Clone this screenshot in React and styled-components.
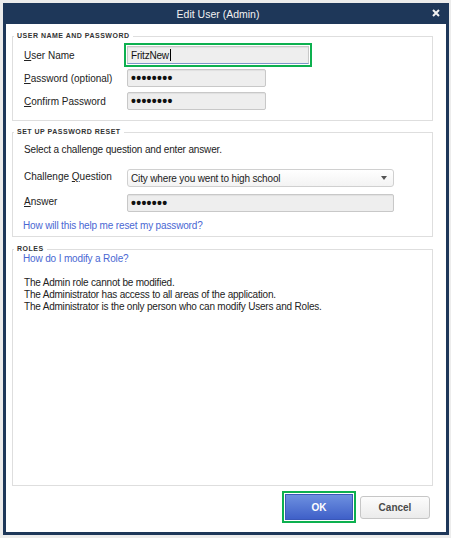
import styled, { createGlobalStyle } from 'styled-components';

const GlobalStyle = createGlobalStyle`
  html, body {
    margin: 0;
    padding: 0;
    background: #ececec;
    font-family: "Liberation Sans", Arial, sans-serif;
  }
`;

const Dialog = styled.div`
  box-sizing: border-box;
  width: 446px;
  height: 532px;
  margin: 3px 0 0 3px;
  border: 3px solid #1e3759;
  background: #fff;
  display: flex;
  flex-direction: column;
`;

const TitleBar = styled.div`
  box-sizing: border-box;
  height: 18px;
  padding: 0 16px 3px 0;
  flex-shrink: 0;
  background: #1e3759;
  display: flex;
  align-items: center;
  justify-content: center;
  position: relative;
  color: #f2f2f2;
  font-size: 10.5px;
`;

const CloseButton = styled.span`
  position: absolute;
  right: 6px;
  top: 3px;
  width: 8px;
  height: 8px;
  display: flex;
`;

const Content = styled.div`
  flex: 1;
  display: flex;
  flex-direction: column;
  padding: 8px 13px 0 6px;
  min-height: 0;
`;

const Group = styled.fieldset`
  margin: ${({ $gap }) => $gap || 0}px 0 0 0;
  padding: 0;
  border: 1px solid #dedede;
  min-width: 0;
  ${({ $grow }) => ($grow ? 'flex: 1;' : '')}
`;

const Legend = styled.legend`
  margin-left: 1px;
  padding: 0 3px;
  font-size: 7px;
  line-height: 8px;
  font-weight: bold;
  letter-spacing: 0.5px;
  color: #333;
`;

const GroupBody = styled.div`
  padding: ${({ $pad }) => $pad || '6px 10px 10px 11px'};
  display: flex;
  flex-direction: column;
`;

const Rows = styled.div`
  display: flex;
  flex-direction: column;
  gap: ${({ $gap }) => $gap ?? 5}px;
  margin-top: ${({ $top }) => $top || 0}px;
`;

const Row = styled.div`
  display: grid;
  grid-template-columns: 103px auto;
  align-items: center;
`;

const Label = styled.label`
  font-size: 10px;
  color: #222;
  margin-top: ${({ $lift }) => ($lift ? '-3px' : '0')};
`;

const Field = styled.div`
  box-sizing: border-box;
  width: ${({ $w }) => $w}px;
  height: 18px;
  background: #eeeeee;
  border: 1px solid #c8c8c8;
  border-radius: 2px;
  box-shadow: inset 0 1px 1px rgba(0, 0, 0, 0.06);
  display: flex;
  align-items: center;
  padding-left: 3px;
  font-size: 10px;
  letter-spacing: -0.2px;
  color: #111;
  ${({ $focused }) =>
    $focused &&
    `
    border-radius: 0;
    border-bottom-color: #7d95c8;
    outline: 2px solid #0db04f;
    outline-offset: 1px;
  `}
`;

const Dots = styled.span`
  font-size: 14px;
  letter-spacing: 0.3px;
  font-weight: bold;
  line-height: 1;
  margin-top: -1px;
`;

const Caret = styled.span`
  display: inline-block;
  width: 1px;
  height: 12px;
  background: #000;
  margin-left: 1px;
`;

const Select = styled.div`
  box-sizing: border-box;
  width: 267px;
  height: 18px;
  background: linear-gradient(#ffffff, #f3f3f3);
  border: 1px solid #d0d0d0;
  border-radius: 3px;
  display: flex;
  align-items: center;
  justify-content: space-between;
  padding: 0 6px 0 3px;
  font-size: 10px;
  letter-spacing: -0.15px;
  color: #222;
`;

const Arrow = styled.span`
  width: 0;
  height: 0;
  border-left: 3.5px solid transparent;
  border-right: 3.5px solid transparent;
  border-top: 4px solid #555;
`;

const Intro = styled.div`
  font-size: 10px;
  line-height: 12px;
  letter-spacing: -0.15px;
  color: #222;
`;

const HelpLink = styled.a`
  display: block;
  font-size: 10px;
  line-height: 12px;
  letter-spacing: -0.15px;
  color: #4a67d3;
  text-decoration: none;
  margin-top: ${({ $top }) => $top || 0}px;
  margin-left: ${({ $left }) => $left || 0}px;
`;

const Notes = styled.div`
  margin-top: 12px;
  font-size: 10px;
  line-height: 12px;
  letter-spacing: -0.2px;
  color: #222;
`;

const Footer = styled.div`
  display: flex;
  justify-content: flex-end;
  align-items: center;
  gap: 7px;
  padding: 8px 3px 12px 0;
`;

const Button = styled.button`
  box-sizing: border-box;
  font-family: inherit;
  font-size: 10px;
  font-weight: bold;
  padding: 0;
  cursor: pointer;
  ${({ $primary }) =>
    $primary
      ? `
    width: 68px;
    height: 26px;
    color: #fff;
    background: linear-gradient(#6d90e0, #3f60c8);
    border: 1px solid #3a58b8;
    border-radius: 0;
    outline: 2px solid #0db04f;
    outline-offset: 1px;
  `
      : `
    width: 70px;
    height: 23px;
    color: #4a4a4a;
    background: linear-gradient(#fcfcfc, #ebebeb);
    border: 1px solid #c6c6c6;
    border-radius: 3px;
  `}
`;

function App() {
  return (
    <>
      <GlobalStyle />
      <Dialog>
        <TitleBar>
          Edit User (Admin)
          <CloseButton>
            <svg width="8" height="8" viewBox="0 0 8 8">
              <path d="M1 1L7 7M7 1L1 7" stroke="#f2f2f2" strokeWidth="2" />
            </svg>
          </CloseButton>
        </TitleBar>
        <Content>
          <Group>
            <Legend>USER NAME AND PASSWORD</Legend>
            <GroupBody>
              <Rows>
                <Row>
                  <Label><u>U</u>ser Name</Label>
                  <Field $w={182} $focused>
                    FritzNew<Caret />
                  </Field>
                </Row>
                <Row>
                  <Label><u>P</u>assword (optional)</Label>
                  <Field $w={139}><Dots>••••••••</Dots></Field>
                </Row>
                <Row>
                  <Label><u>C</u>onfirm Password</Label>
                  <Field $w={139}><Dots>••••••••</Dots></Field>
                </Row>
              </Rows>
            </GroupBody>
          </Group>

          <Group $gap={7}>
            <Legend>SET UP PASSWORD RESET</Legend>
            <GroupBody $pad="8px 10px 4px 11px">
              <Intro>Select a challenge question and enter answer.</Intro>
              <Rows $top={13} $gap={7}>
                <Row>
                  <Label $lift>Challenge <u>Q</u>uestion</Label>
                  <Select>
                    City where you went to high school
                    <Arrow />
                  </Select>
                </Row>
                <Row>
                  <Label $lift><u>A</u>nswer</Label>
                  <Field $w={267}><Dots>•••••••</Dots></Field>
                </Row>
              </Rows>
              <HelpLink href="#" $top={8} $left={-1}>
                How will this help me reset my password?
              </HelpLink>
            </GroupBody>
          </Group>

          <Group $gap={8} $grow>
            <Legend>ROLES</Legend>
            <GroupBody $pad="0 10px 0 11px">
              <HelpLink href="#" $left={-1}>How do I modify a Role?</HelpLink>
              <Notes>
                The Admin role cannot be modified.
                <br />
                The Administrator has access to all areas of the application.
                <br />
                The Administrator is the only person who can modify Users and Roles.
              </Notes>
            </GroupBody>
          </Group>

          <Footer>
            <Button $primary>OK</Button>
            <Button>Cancel</Button>
          </Footer>
        </Content>
      </Dialog>
    </>
  );
}

export default App;
